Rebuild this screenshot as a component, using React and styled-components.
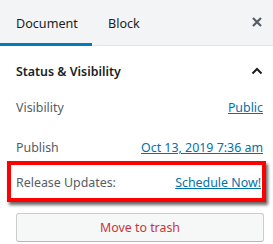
import styled, { createGlobalStyle } from "styled-components";

const Global = createGlobalStyle`
  body {
    margin: 0;
    background: #fff;
    font-family: "Noto Sans", "Open Sans", sans-serif;
    font-size: 12.4px;
    color: #191e23;
  }
`;

const Panel = styled.div`
  width: 273px;
  height: 244px;
  overflow: hidden;
  background: #fff;
`;

const Tabs = styled.div`
  display: flex;
  align-items: stretch;
  height: 46px;
  background: #f3f4f5;
  border-bottom: 1px solid #e2e4e7;
  box-sizing: border-box;
`;

const Tab = styled.button`
  border: 0;
  background: none;
  font: inherit;
  font-size: 12.6px;
  color: #191e23;
  padding: 0 16px;
  width: ${(p) => p.$w}px;
  text-align: left;
  box-shadow: ${(p) => (p.$active ? "inset 0 -3px #007cba" : "none")};
  margin-bottom: -1px;
`;

const Close = styled.button`
  margin-left: auto;
  border: 0;
  background: none;
  width: 32px;
  display: flex;
  align-items: center;
  justify-content: center;
  padding: 0 0 2px;
`;

const Section = styled.div`
  padding: 0 10px 0 16px;
`;

const SectionHead = styled.div`
  display: flex;
  align-items: center;
  justify-content: space-between;
  height: 50px;
  font-weight: 600;
  color: #191e23;
`;

const Row = styled.div`
  display: flex;
  align-items: center;
  justify-content: space-between;
  height: 22px;
  margin-top: ${(p) => p.$gap || 0}px;
  color: #555d66;
`;

const Link = styled.a`
  color: #0073aa;
  text-decoration: underline;
`;

const Highlight = styled.div`
  margin: 3px -3px 0 -9px;
  border: 4px solid #f00;
  box-shadow: 2px 3px 3px rgba(0, 0, 0, 0.6);
  padding: 6px 1px 5px 5px;
`;

const TrashButton = styled.button`
  display: block;
  width: 248px;
  height: 29px;
  margin-top: 11px;
  border: 1px solid #ccc;
  border-bottom-color: #b8b8b8;
  border-radius: 3px;
  background: #f6f7f7;
  color: #c9353a;
  font: inherit;
`;

export default function App() {
  return (
    <Panel>
      <Global />
      <Tabs>
        <Tab $active $w={92}>Document</Tab>
        <Tab $w={70}>Block</Tab>
        <Close>
          <svg width="12" height="12" viewBox="0 0 12 12">
            <path d="M2 2l8 8M10 2l-8 8" stroke="#555d66" strokeWidth="2.2" />
          </svg>
        </Close>
      </Tabs>
      <Section>
        <SectionHead>
          Status &amp; Visibility
          <svg width="12" height="8" viewBox="0 0 12 8">
            <path d="M1.5 6.5L6 2l4.5 4.5" stroke="#191e23" strokeWidth="2" fill="none" />
          </svg>
        </SectionHead>
        <Row>
          Visibility <Link>Public</Link>
        </Row>
        <Row $gap={18}>
          Publish <Link>Oct 13, 2019 7:36 am</Link>
        </Row>
        <Highlight>
          <Row>
            Release Updates: <Link>Schedule Now!</Link>
          </Row>
        </Highlight>
        <TrashButton>Move to trash</TrashButton>
      </Section>
    </Panel>
  );
}
